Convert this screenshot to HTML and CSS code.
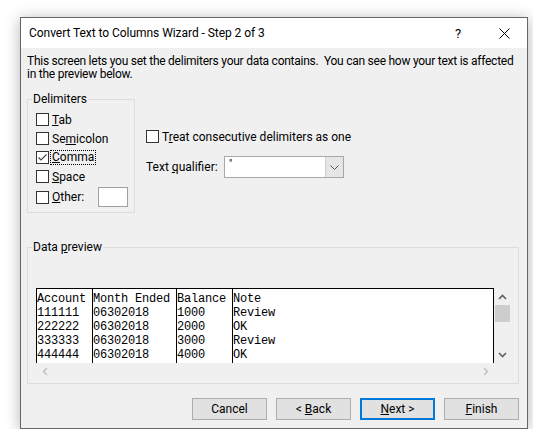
FILE: index.html
```html
<!DOCTYPE html>
<html>
<head>
<meta charset="utf-8">
<title>Convert Text to Columns Wizard</title>
<link rel="stylesheet" href="styles.css">
</head>
<body>
<div class="window">
  <div class="titlebar">
    <span class="title">Convert Text to Columns Wizard - Step 2 of 3</span>
    <span class="tb-btn help">?</span>
    <span class="tb-btn close"><svg width="11" height="11" viewBox="0 0 11 11"><path d="M0.5 0.5L10.5 10.5M10.5 0.5L0.5 10.5" stroke="#000" stroke-width="1" fill="none"/></svg></span>
  </div>
  <div class="content">
    <p class="desc">This screen lets you set the delimiters your data contains.&nbsp; You can see how your text is affected<br>in the preview below.</p>
    <div class="options">
      <fieldset class="group delims">
        <legend>Delimiters</legend>
        <div class="check"><span class="box"></span><span><u>T</u>ab</span></div>
        <div class="check"><span class="box"></span><span>Se<u>m</u>icolon</span></div>
        <div class="check"><span class="box"><svg width="11" height="11" viewBox="0 0 11 11"><path d="M1.5 5.5L4 8L9.5 2.5" stroke="#444" stroke-width="1.1" fill="none"/></svg></span><span class="focus"><u>C</u>omma</span></div>
        <div class="check"><span class="box"></span><span><u>S</u>pace</span></div>
        <div class="check other"><span class="box"></span><span class="other-label"><u>O</u>ther:</span><span class="textbox"></span></div>
      </fieldset>
      <div class="right">
        <div class="check treat"><span class="box"></span><span>T<u>r</u>eat consecutive delimiters as one</span></div>
        <div class="qual">
          <span class="qual-label">Text <u>q</u>ualifier:</span>
          <div class="combo">
            <span class="combo-val">"</span>
            <span class="combo-drop"><svg width="9" height="5" viewBox="0 0 9 5"><path d="M0.5 0.5L4.5 4.5L8.5 0.5" stroke="#555" stroke-width="1" fill="none"/></svg></span>
          </div>
        </div>
      </div>
    </div>
    <fieldset class="group preview">
      <legend>Data <u>p</u>review</legend>
      <div class="pv">
        <div class="pv-main">
          <div class="grid">
            <div class="col c1">Account
111111
222222
333333
444444</div>
            <div class="col c2">Month Ended
06302018
06302018
06302018
06302018</div>
            <div class="col c3">Balance
1000
2000
3000
4000</div>
            <div class="col c4">Note
Review
OK
Review
OK</div>
          </div>
          <div class="vscroll">
            <span class="arrow"><svg width="9" height="6" viewBox="0 0 9 6"><path d="M1 5L4.5 1.5L8 5" stroke="#606060" stroke-width="1.6" fill="none"/></svg></span>
            <span class="thumb"></span>
            <span class="track"></span>
            <span class="arrow"><svg width="9" height="6" viewBox="0 0 9 6"><path d="M1 1L4.5 4.5L8 1" stroke="#606060" stroke-width="1.6" fill="none"/></svg></span>
          </div>
        </div>
        <div class="hscroll">
          <span class="arrow"><svg width="6" height="9" viewBox="0 0 6 9"><path d="M5 1L1.5 4.5L5 8" stroke="#c2c2c2" stroke-width="1.6" fill="none"/></svg></span>
          <span class="arrow"><svg width="6" height="9" viewBox="0 0 6 9"><path d="M1 1L4.5 4.5L1 8" stroke="#c2c2c2" stroke-width="1.6" fill="none"/></svg></span>
        </div>
      </div>
    </fieldset>
    <div class="buttons">
      <button class="btn">Cancel</button>
      <button class="btn">&lt; <u>B</u>ack</button>
      <button class="btn primary"><u>N</u>ext &gt;</button>
      <button class="btn"><u>F</u>inish</button>
    </div>
  </div>
</div>
</body>
</html>
```

FILE: styles.css
```css
html, body {
  margin: 0;
  background: #ffffff;
}
body {
  padding: 17px 0 0 20px;
  font-family: Roboto, "Liberation Sans", sans-serif;
  font-size: 12px;
  color: #000;
}
.window {
  width: 508px;
  height: 412px;
  box-sizing: border-box;
  border: 1px solid #666;
  background: #f0f0f0;
  box-shadow: 0 2px 14px rgba(0, 0, 0, 0.3);
  display: flex;
  flex-direction: column;
}
.titlebar {
  height: 30px;
  flex: none;
  background: #fff;
  display: flex;
  align-items: center;
}
.title {
  flex: 1;
  padding-left: 8px;
  letter-spacing: -0.05px;
}
.tb-btn {
  width: 46px;
  height: 30px;
  display: flex;
  align-items: center;
  justify-content: center;
}
.help { font-size: 13px; }
.content {
  flex: 1;
  padding: 7px 8px 0 6px;
}
.desc {
  margin: 0;
  line-height: 13px;
  white-space: nowrap;
  letter-spacing: -0.25px;
}
.options {
  display: flex;
  align-items: flex-start;
  margin-top: 10px;
}
fieldset.group {
  margin: 0;
  min-width: 0;
  border: 1px solid #dcdcdc;
  padding: 3px 0 5px 4px;
}
fieldset.group legend {
  padding: 0 1px;
  line-height: 16px;
}
.delims {
  width: 108px;
  box-sizing: border-box;
}
.check {
  display: flex;
  align-items: center;
  height: 19px;
  margin-left: 4px;
  white-space: nowrap;
}
.box {
  width: 13px;
  height: 13px;
  box-sizing: border-box;
  border: 1px solid #333;
  background: #fff;
  margin-right: 3px;
  flex: none;
  display: flex;
  align-items: center;
  justify-content: center;
}
.box svg { display: block; }
.focus {
  outline: 1px dotted #000;
  outline-offset: 0;
  padding: 0 1px;
  margin-left: -1px;
  line-height: 13px;
}
.check.other {
  height: 20px;
  margin-top: 1px;
}
.other-label {
  width: 46px;
}
.textbox {
  width: 30px;
  height: 20px;
  box-sizing: border-box;
  border: 1px solid #a0a0a0;
  background: #fff;
}
.right {
  margin-left: 11px;
}
.check.treat {
  margin: 38px 0 0 0;
  height: 15px;
}
.qual {
  display: flex;
  align-items: center;
  margin-top: 12px;
  height: 22px;
}
.qual-label {
  width: 78px;
}
.combo {
  width: 120px;
  height: 22px;
  box-sizing: border-box;
  border: 1px solid #a8a8a8;
  background: #fff;
  display: flex;
}
.combo-val {
  flex: 1;
  padding: 1px 0 0 4px;
  font-size: 10px;
  line-height: 12px;
}
.combo-drop {
  width: 17px;
  background: #e6e6e6;
  border-left: 1px solid #cfcfcf;
  display: flex;
  align-items: center;
  justify-content: center;
}
.preview {
  margin-top: 26px !important;
  padding: 33px 0 3px 4px !important;
}
.pv {
  margin-left: 4px;
  width: 475px;
}
.pv-main {
  display: flex;
  height: 75px;
}
.grid {
  width: 458px;
  box-sizing: border-box;
  display: flex;
  background: #fff;
  border-top: 1px solid #000;
  border-right: 1px solid #000;
  font-family: "Liberation Mono", "Courier New", monospace;
  font-size: 12px;
  letter-spacing: -0.2px;
  line-height: 14px;
  color: #000;
}
.col {
  box-sizing: border-box;
  border-left: 1px solid #000;
  padding-top: 3px;
  white-space: pre;
  overflow: hidden;
}
.c1 { width: 56px; }
.c2 { width: 84px; }
.c3 { width: 56px; }
.c4 { flex: 1; }
.vscroll {
  width: 17px;
  display: flex;
  flex-direction: column;
}
.vscroll .arrow {
  height: 17px;
  display: flex;
  align-items: center;
  justify-content: center;
  flex: none;
}
.thumb {
  height: 17px;
  margin-left: 1px;
  width: 15px;
  background: #cdcdcd;
  flex: none;
}
.track { flex: 1; }
.hscroll {
  width: 458px;
  height: 17px;
  display: flex;
  justify-content: space-between;
}
.hscroll .arrow {
  width: 17px;
  display: flex;
  align-items: center;
  justify-content: center;
}
.buttons {
  display: flex;
  justify-content: flex-end;
  gap: 9px;
  margin-top: 14px;
}
.btn {
  width: 75px;
  height: 22px;
  box-sizing: border-box;
  border: 1px solid #adadad;
  background: #e1e1e1;
  font: inherit;
  color: #000;
  padding: 0;
}
.btn.primary {
  border: 2px solid #0078d7;
}
```
